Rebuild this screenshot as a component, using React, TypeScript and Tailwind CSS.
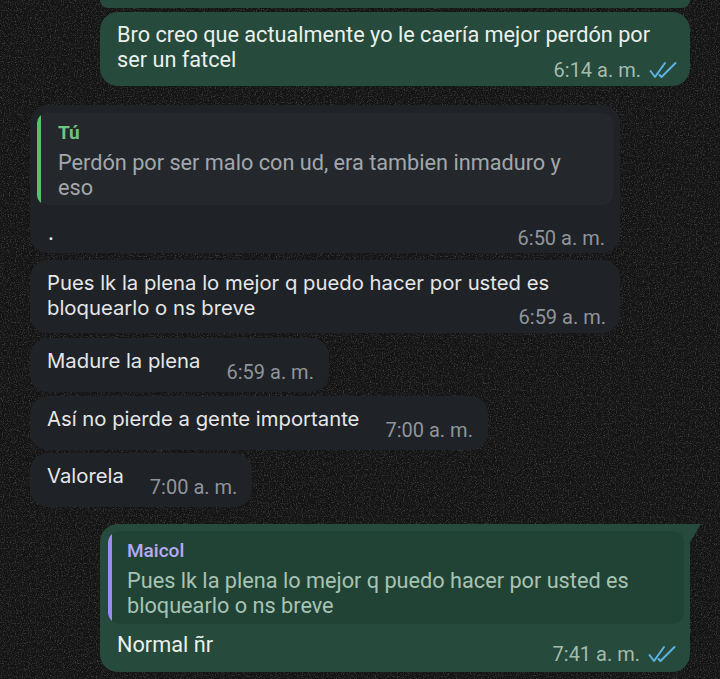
import React from 'react';

const roboto = { fontFamily: 'Roboto, "Noto Sans", sans-serif' };

function Checks() {
  return (
    <svg viewBox="0 0 28 18" className="w-[28px] h-[18px] ml-[8px] shrink-0" fill="none" stroke="#5db3e4" strokeWidth="2" strokeLinecap="round" strokeLinejoin="round">
      <path d="M1.5 10 L6 16 L16 2" />
      <path d="M10.5 14 L12.5 16 L26.5 2" />
    </svg>
  );
}

function Time({ t, out, className = '' }: { t: string; out?: boolean; className?: string }) {
  return (
    <span className={`block font-['Roboto'] text-[20px] leading-[20px] whitespace-nowrap ${out ? 'text-[#a3bcae]' : 'text-[#8f959b]'} ${className}`}>
      {t}
    </span>
  );
}

export default function App() {
  return (
    <div className="relative w-[720px] h-[679px] overflow-hidden bg-[#141414]" style={roboto}>
      {/* granite texture */}
      <svg className="absolute inset-0 w-full h-full pointer-events-none" aria-hidden>
        <filter id="grain">
          <feTurbulence type="fractalNoise" baseFrequency="0.85" numOctaves="2" seed="4" />
          <feColorMatrix type="matrix" values="0 0 0 0 0.6  0 0 0 0 0.6  0 0 0 0 0.6  0 0 0 1.5 -0.72" />
        </filter>
        <rect width="100%" height="100%" filter="url(#grain)" opacity="0.45" />
      </svg>

      <div className="relative flex flex-col">
        {/* end of previous message */}
        <div className="ml-[100px] w-[590px] h-[8px] bg-[#264a3b] rounded-b-[18px]" />

        {/* outgoing 1 */}
        <div className="ml-[100px] mt-[4px] w-[590px] bg-[#264a3b] rounded-[18px] pt-[10px] px-[17px] pb-[6px]">
          <p className="text-[21.7px] leading-[25px] text-[#eaf0ec] whitespace-nowrap">
            Bro creo que actualmente yo le caería mejor perdón por<br />ser un fatcel
          </p>
          <div className="flex justify-end items-center mt-[-12px] mr-[-4px]">
            <Time t="6:14 a. m." out />
            <Checks />
          </div>
        </div>

        {/* incoming reply */}
        <div className="ml-[30px] mt-[19px] w-[590px] bg-[#1f2226] rounded-[18px] pt-[8px] px-[7px] pb-[5px] font-['Inter']">
          <div className="flex rounded-[10px] bg-[#24282d] overflow-hidden">
            <div className="w-[4px] bg-[#5bc06e] shrink-0" />
            <div className="pl-[17px] pt-[8px] pb-[5px] font-['Roboto']">
              <div className="text-[19px] leading-[24px] font-bold text-[#6cc581]">Tú</div>
              <p className="mt-[5px] text-[21.7px] leading-[25px] text-[#a3a7ab] whitespace-nowrap">
                Perdón por ser malo con ud, era tambien inmaduro y<br />eso
              </p>
            </div>
          </div>
          <p className="pl-[11px] pt-[15px] text-[20.3px] leading-[25px] text-[#e6e7e8]">.</p>
          <div className="flex justify-end mt-[-17px] pr-[8px]">
            <Time t="6:50 a. m." />
          </div>
        </div>

        {/* incoming 3 */}
        <div className="ml-[30px] mt-[7px] w-[590px] bg-[#1f2226] rounded-[18px] pt-[10px] px-[17px] pb-[6px] font-['Inter']">
          <p className="text-[20.3px] leading-[25px] text-[#e6e7e8] whitespace-nowrap">
            Pues lk la plena lo mejor q puedo hacer por usted es<br />bloquearlo o ns breve
          </p>
          <div className="flex justify-end mt-[-13px] mr-[-3px]">
            <Time t="6:59 a. m." />
          </div>
        </div>

        {[
          { text: 'Madure la plena', t: '6:59 a. m.', mt: 'mt-[5px]' },
          { text: 'Así no pierde a gente importante', t: '7:00 a. m.', mt: 'mt-[4px]' },
          { text: 'Valorela', t: '7:00 a. m.', mt: 'mt-[3px]' },
        ].map((m) => (
          <div key={m.text} className={`ml-[30px] ${m.mt} w-fit flex items-start bg-[#1f2226] rounded-[18px] py-[10px] pl-[17px] pr-[15px] gap-[26px] font-['Inter']`}>
            <span className="text-[20.3px] leading-[25px] text-[#e6e7e8] whitespace-nowrap">{m.text}</span>
            <Time t={m.t} className="mt-[14px]" />
          </div>
        ))}

        {/* outgoing reply with tail */}
        <div className="relative ml-[100px] mt-[17px] w-[590px] bg-[#264a3b] rounded-[18px] rounded-tr-none pt-[7px] pl-[8px] pr-[6px] pb-[8px]">
          <svg className="absolute top-0 right-[-12px] w-[13px] h-[20px]" viewBox="0 0 13 20" aria-hidden>
            <path d="M0 0 H12 L0 20 Z" fill="#264a3b" />
          </svg>
          <div className="flex rounded-[12px] bg-[#214335] overflow-hidden">
            <div className="w-[4px] bg-[#9d8cf0] shrink-0" />
            <div className="pl-[15px] pt-[8px] pb-[6px]">
              <div className="text-[19px] leading-[24px] font-medium text-[#b7a9f6]">Maicol</div>
              <p className="mt-[5px] text-[21.7px] leading-[25px] text-[#a8c3b4] whitespace-nowrap">
                Pues lk la plena lo mejor q puedo hacer por usted es<br />bloquearlo o ns breve
              </p>
            </div>
          </div>
          <p className="pl-[9px] pt-[8px] text-[21.7px] leading-[25px] text-[#eaf0ec]">Normal ñr</p>
          <div className="flex justify-end items-center mt-[-13px] pr-[8px]">
            <Time t="7:41 a. m." out />
            <Checks />
          </div>
        </div>
      </div>
    </div>
  );
}
